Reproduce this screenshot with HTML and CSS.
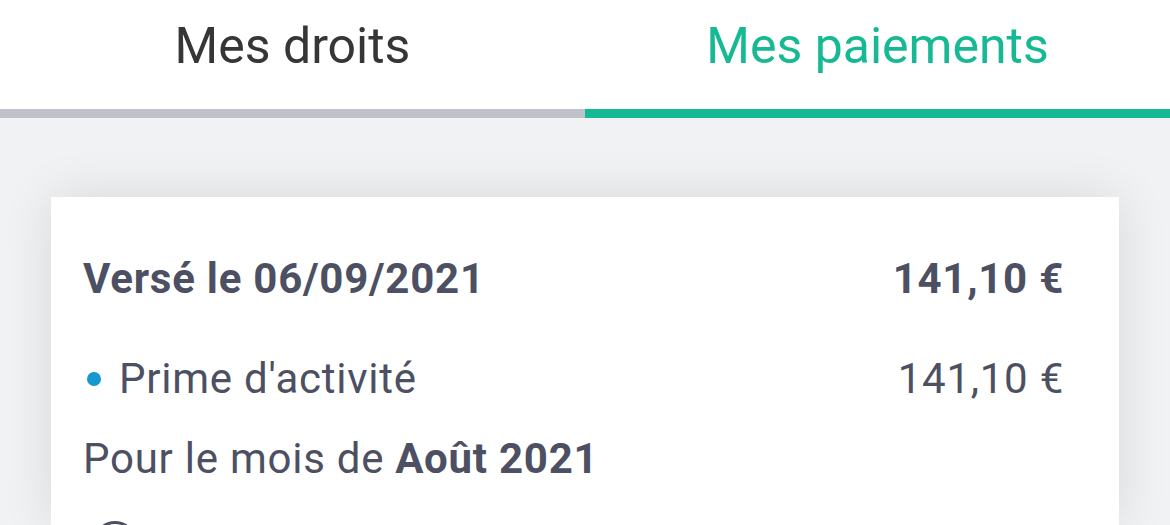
FILE: index.html
```html
<!DOCTYPE html>
<html lang="fr">
<head>
<meta charset="utf-8">
<link rel="stylesheet" href="styles.css">
</head>
<body>
<nav class="tabs">
  <div class="tab">Mes droits</div>
  <div class="tab tab-active">Mes paiements</div>
</nav>
<main class="content">
  <section class="card">
    <div class="row row-head">
      <span class="strong">Versé le 06/09/2021</span>
      <span class="strong">141,10 €</span>
    </div>
    <div class="row row-item">
      <span class="item-label"><span class="dot"></span>Prime d'activité</span>
      <span>141,10 €</span>
    </div>
    <div class="row row-month">
      <span>Pour le mois de <b class="strong">Août 2021</b></span>
    </div>
    <div class="row row-more">
      <span class="more-icon"></span>
    </div>
  </section>
</main>
</body>
</html>
```
FILE: styles.css
```css
html, body {
  margin: 0;
  padding: 0;
  background: #f1f2f4;
  font-family: Roboto, "Noto Sans", sans-serif;
  overflow: hidden;
  height: 525px;
}

.tabs {
  display: flex;
  background: #ffffff;
}

.tab {
  flex: 1;
  box-sizing: border-box;
  height: 118px;
  padding-top: 17px;
  font-size: 50px;
  line-height: 58px;
  text-align: center;
  color: #363636;
  border-bottom: 9px solid #c1c1cc;
}

.tab-active {
  color: #17b994;
  border-bottom-color: #14b994;
}

.content {
  padding: 79px 51px 0;
}

.card {
  box-sizing: border-box;
  background: #ffffff;
  box-shadow: 0 0 48px rgba(0, 0, 0, 0.11);
  padding: 57px 55px 0 32px;
  height: 328px;
  overflow: hidden;
  color: #4c5062;
  font-size: 42px;
  line-height: 50px;
  letter-spacing: 0.75px;
}

.row {
  display: flex;
  justify-content: space-between;
  align-items: center;
}

.strong {
  font-weight: 700;
}

.row-item {
  margin-top: 50px;
}

.row-month {
  margin-top: 30px;
}

.item-label {
  display: flex;
  align-items: center;
}

.dot {
  width: 14px;
  height: 14px;
  border-radius: 50%;
  background: #1697cf;
  margin: 0 18px 0 4px;
}

.row-more {
  margin-top: 37px;
}

.more-icon {
  margin-left: 10px;
  width: 38px;
  height: 38px;
  border-radius: 50%;
  border: 3px solid #4c5062;
}
```
